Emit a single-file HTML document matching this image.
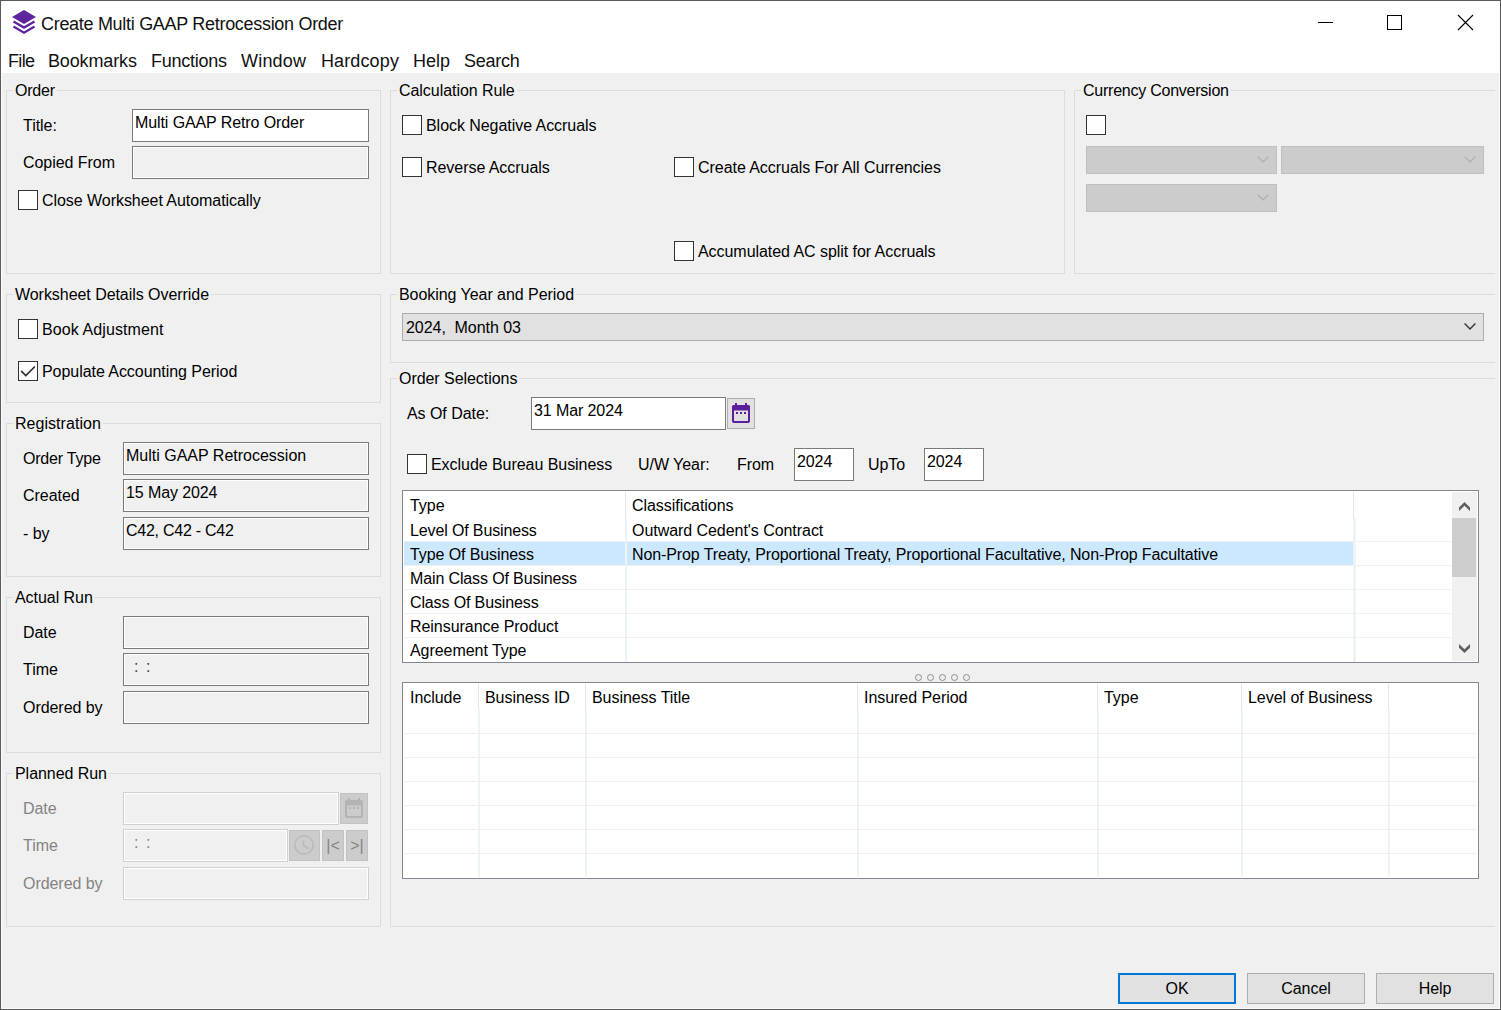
<!DOCTYPE html>
<html lang="en">
<head>
<meta charset="utf-8">
<title>Create Multi GAAP Retrocession Order</title>
<style>
*{box-sizing:border-box;margin:0;padding:0}
html,body{width:1501px;height:1010px;overflow:hidden;background:#f0f0f0}
body{font-family:"Liberation Sans",Arial,sans-serif;font-size:16px;color:#000;position:relative;letter-spacing:-0.05px}
.abs,.abs-all *{position:absolute}
#win{position:absolute;left:0;top:0;width:1501px;height:1010px;background:#f0f0f0;overflow:hidden}
#win>*,.g>*{position:absolute}
#frame{left:0;top:0;width:1501px;height:1010px;border:1px solid #5a5a5a;box-shadow:inset 0 0 0 1px #fcfcfc;pointer-events:none;z-index:50}
#titlebar{left:1px;top:1px;width:1499px;height:72px;background:#fff}
#title{color:#111;left:41px;top:13px;font-size:18px;line-height:22px;letter-spacing:-0.3px;white-space:nowrap}
.menu{color:#111;top:50px;font-size:18px;line-height:22px;letter-spacing:-0.25px;white-space:nowrap}
.g{border:1px solid #dcdcdc}
.gl{top:-10px;left:6px;padding:0 2px;background:#f0f0f0;line-height:20px;white-space:nowrap}
.t{white-space:nowrap;line-height:20px}
.dis{color:#838383}
.cb{width:20px;height:20px;background:#fff;border:1px solid #333}
.tf{background:#fff;border:1px solid #7a7a7a;padding:4px 0 0 2px;letter-spacing:-0.1px;line-height:18px;white-space:nowrap;overflow:hidden}
.ro{background:#f0f0f0;border:1px solid #7a7a7a;box-shadow:inset 0 0 0 1px #fff;padding:4px 0 0 2px;letter-spacing:-0.1px;line-height:18px;white-space:nowrap;overflow:hidden}
.df{background:#f0f0f0;border:1px solid #d0d0d0;box-shadow:inset 0 0 0 1px #fff;padding:4px 0 0 2px;letter-spacing:-0.1px;line-height:18px;white-space:nowrap;overflow:hidden;color:#838383}
.dcombo{background:#cccccc;border:1px solid #bfbfbf}
.dbtn{background:#cccccc;border:1px solid #c2c2c2}
.dt{color:#838383;text-align:center;line-height:29px;letter-spacing:0}
.btn{background:#e1e1e1;border:1px solid #adadad;text-align:center;line-height:30px;height:31px;width:118px;top:973px}
#tt>*,#bt>*{position:absolute}
.c{line-height:24px;white-space:nowrap}
.hs{width:1px;background:#e5e5e5}
.vs{width:2px;background:linear-gradient(90deg,#ebf3fc 0,#ebf3fc 1px,#f0f2f5 1px,#f0f2f5 2px)}
.vs3{width:3px;background:linear-gradient(90deg,#ebf3fc 0,#ebf3fc 1px,#eeeff1 1px,#eeeff1 2px,#eef5fd 2px,#eef5fd 3px)}
.hl{left:1px;height:1px;background:#efefef}
#tt .hl{width:1047px}
#bt .hl{width:1073px}
svg{position:absolute;overflow:visible}
</style>
</head>
<body>
<div id="win">
  <div id="titlebar"></div>
  <!-- title icon -->
  <svg style="left:0;top:0" width="48" height="44" viewBox="0 0 48 44">
    <path d="M24 10 L36 17 L24 24 L12 17 Z" fill="#5e259f"/>
    <path d="M13.5 21.5 L24 27.6 L34.5 21.5" stroke="#5e259f" stroke-width="2.3" fill="none" stroke-linecap="butt" stroke-linejoin="miter"/>
    <path d="M13.5 26.6 L24 32.7 L34.5 26.6" stroke="#5e259f" stroke-width="2.3" fill="none" stroke-linecap="butt" stroke-linejoin="miter"/>
  </svg>
  <div id="title">Create Multi GAAP Retrocession Order</div>
  <!-- window controls -->
  <svg style="left:1318px;top:15px" width="160" height="16" viewBox="0 0 160 16">
    <path d="M0 7.5 H15" stroke="#000" stroke-width="1" fill="none"/>
    <rect x="69.5" y="0.5" width="14" height="14" stroke="#000" stroke-width="1" fill="none"/>
    <path d="M140 0 L155 15 M155 0 L140 15" stroke="#000" stroke-width="1.1" fill="none"/>
  </svg>
  <!-- menu -->
  <div class="menu" style="left:8px;letter-spacing:-0.65px">File</div>
  <div class="menu" style="left:48px;letter-spacing:-0.14px">Bookmarks</div>
  <div class="menu" style="left:151px">Functions</div>
  <div class="menu" style="left:241px;letter-spacing:0.2px">Window</div>
  <div class="menu" style="left:321px;letter-spacing:0.12px">Hardcopy</div>
  <div class="menu" style="left:413px;letter-spacing:0">Help</div>
  <div class="menu" style="left:464px">Search</div>

  <!-- ORDER -->
  <div class="g" style="left:6px;top:90px;width:375px;height:184px">
    <div class="gl" style="letter-spacing:-0.2px">Order</div>
    <div class="t" style="left:16px;top:25px">Title:</div>
    <div class="tf" style="left:125px;top:18px;width:237px;height:33px">Multi GAAP Retro Order</div>
    <div class="t" style="left:16px;top:62px">Copied From</div>
    <div class="ro" style="left:125px;top:55px;width:237px;height:33px"></div>
    <div class="cb" style="left:11px;top:99px"></div>
    <div class="t" style="left:35px;top:100px">Close Worksheet Automatically</div>
  </div>

  <!-- WORKSHEET DETAILS OVERRIDE -->
  <div class="g" style="left:6px;top:294px;width:375px;height:109px">
    <div class="gl">Worksheet Details Override</div>
    <div class="cb" style="left:11px;top:24px"></div>
    <div class="t" style="left:35px;top:25px;letter-spacing:0.1px">Book Adjustment</div>
    <div class="cb" style="left:11px;top:66px"></div>
    <svg style="left:11px;top:66px" width="20" height="20" viewBox="0 0 20 20"><path d="M3.6 10.4 L7.8 14.6 L16.4 6" stroke="#2e2e2e" stroke-width="1.7" fill="none" stroke-linecap="round"/></svg>
    <div class="t" style="left:35px;top:67px">Populate Accounting Period</div>
  </div>

  <!-- REGISTRATION -->
  <div class="g" style="left:6px;top:423px;width:375px;height:154px">
    <div class="gl" style="letter-spacing:0.04px">Registration</div>
    <div class="t" style="left:16px;top:25px;letter-spacing:-0.2px">Order Type</div>
    <div class="ro" style="left:116px;top:18px;width:246px;height:33px;letter-spacing:0">Multi GAAP Retrocession</div>
    <div class="t" style="left:16px;top:62px">Created</div>
    <div class="ro" style="left:116px;top:55px;width:246px;height:33px">15 May 2024</div>
    <div class="t" style="left:16px;top:100px">- by</div>
    <div class="ro" style="left:116px;top:93px;width:246px;height:33px;letter-spacing:-0.25px">C42, C42 - C42</div>
  </div>

  <!-- ACTUAL RUN -->
  <div class="g" style="left:6px;top:597px;width:375px;height:156px">
    <div class="gl">Actual Run</div>
    <div class="t" style="left:16px;top:25px">Date</div>
    <div class="ro" style="left:116px;top:18px;width:246px;height:33px"></div>
    <div class="t" style="left:16px;top:62px">Time</div>
    <div class="ro" style="left:116px;top:55px;width:246px;height:33px;white-space:pre;letter-spacing:-0.45px;color:#3a3a3a">  :  :</div>
    <div class="t" style="left:16px;top:100px">Ordered by</div>
    <div class="ro" style="left:116px;top:93px;width:246px;height:33px"></div>
  </div>

  <!-- PLANNED RUN -->
  <div class="g" style="left:6px;top:773px;width:375px;height:154px">
    <div class="gl">Planned Run</div>
    <div class="t dis" style="left:16px;top:25px">Date</div>
    <div class="df" style="left:116px;top:18px;width:216px;height:33px"></div>
    <div class="dbtn" style="left:333px;top:19px;width:28px;height:31px"><svg style="left:-1px;top:-1px" width="28" height="31" viewBox="0 0 28 31"><rect x="6" y="8" width="16" height="16" rx="1.6" fill="none" stroke="#b4b4b4" stroke-width="2"/><path d="M5 12.5 V9 a2 2 0 0 1 2 -2 H21 a2 2 0 0 1 2 2 V12.5 Z" fill="#b4b4b4"/><rect x="8" y="5" width="2" height="3" fill="#b4b4b4"/><rect x="18" y="5" width="2" height="3" fill="#b4b4b4"/><rect x="9" y="14" width="2" height="2" fill="#b4b4b4"/><rect x="13" y="14" width="2" height="2" fill="#b4b4b4"/><rect x="17" y="14" width="2" height="2" fill="#b4b4b4"/></svg></div>
    <div class="t dis" style="left:16px;top:62px">Time</div>
    <div class="df" style="left:116px;top:55px;width:165px;height:33px;white-space:pre;letter-spacing:-0.45px">  :  :</div>
    <div class="dbtn" style="left:282px;top:56px;width:31px;height:31px"><svg style="left:-1px;top:-1px" width="31" height="31" viewBox="0 0 31 31"><circle cx="15" cy="15" r="9.2" fill="none" stroke="#bababa" stroke-width="1.6"/><path d="M14.5 10.5 V15.5 L19.5 18.7" fill="none" stroke="#bababa" stroke-width="1.5"/></svg></div>
    <div class="dbtn dt" style="left:315px;top:56px;width:22px;height:31px">|&lt;</div>
    <div class="dbtn dt" style="left:339px;top:56px;width:22px;height:31px">&gt;|</div>
    <div class="t dis" style="left:16px;top:100px">Ordered by</div>
    <div class="df" style="left:116px;top:93px;width:246px;height:33px"></div>
  </div>

  <!-- CALCULATION RULE -->
  <div class="g" style="left:390px;top:90px;width:675px;height:184px">
    <div class="gl">Calculation Rule</div>
    <div class="cb" style="left:11px;top:24px"></div>
    <div class="t" style="left:35px;top:25px">Block Negative Accruals</div>
    <div class="cb" style="left:11px;top:66px"></div>
    <div class="t" style="left:35px;top:67px">Reverse Accruals</div>
    <div class="cb" style="left:283px;top:66px"></div>
    <div class="t" style="left:307px;top:67px">Create Accruals For All Currencies</div>
    <div class="cb" style="left:283px;top:150px"></div>
    <div class="t" style="left:307px;top:151px">Accumulated AC split for Accruals</div>
  </div>

  <!-- CURRENCY CONVERSION -->
  <div class="g" style="left:1074px;top:90px;width:421px;height:184px;border-right:0">
    <div class="gl" style="letter-spacing:-0.24px">Currency Conversion</div>
    <div class="cb" style="left:11px;top:24px"></div>
    <div class="dcombo" style="left:11px;top:55px;width:191px;height:28px"><svg style="right:7px;top:9px" width="12" height="7" viewBox="0 0 12 7"><path d="M0.6 0.6 L6 6 L11.4 0.6" fill="none" stroke="#adadad" stroke-width="1.2"/></svg></div>
    <div class="dcombo" style="left:206px;top:55px;width:203px;height:28px"><svg style="right:7px;top:9px" width="12" height="7" viewBox="0 0 12 7"><path d="M0.6 0.6 L6 6 L11.4 0.6" fill="none" stroke="#adadad" stroke-width="1.2"/></svg></div>
    <div class="dcombo" style="left:11px;top:93px;width:191px;height:28px"><svg style="right:7px;top:9px" width="12" height="7" viewBox="0 0 12 7"><path d="M0.6 0.6 L6 6 L11.4 0.6" fill="none" stroke="#adadad" stroke-width="1.2"/></svg></div>
  </div>

  <!-- BOOKING YEAR AND PERIOD -->
  <div class="g" style="left:390px;top:294px;width:1105px;height:69px;border-right:0">
    <div class="gl">Booking Year and Period</div>
    <div style="left:11px;top:18px;width:1082px;height:28px;background:#e1e1e1;border:1px solid #adadad;line-height:28px;padding-left:3px;white-space:pre">2024,  Month 03<svg style="right:7px;top:9px" width="12" height="7" viewBox="0 0 12 7"><path d="M0.6 0.6 L6 6 L11.4 0.6" fill="none" stroke="#333" stroke-width="1.4"/></svg></div>
  </div>

  <!-- ORDER SELECTIONS -->
  <div class="g" style="left:390px;top:378px;width:1105px;height:549px;border-right:0">
    <div class="gl">Order Selections</div>
    <div class="t" style="left:16px;top:25px">As Of Date:</div>
    <div class="tf" style="left:140px;top:18px;width:195px;height:33px">31 Mar 2024</div>
    <div style="left:336px;top:19px;width:28px;height:31px;background:#e1e1e1;border:1px solid #adadad"><svg style="left:-1px;top:-1px" width="28" height="31" viewBox="0 0 28 31"><rect x="6" y="8" width="16" height="16" rx="1.6" fill="none" stroke="#5a1f9d" stroke-width="2"/><path d="M5 12.5 V9 a2 2 0 0 1 2 -2 H21 a2 2 0 0 1 2 2 V12.5 Z" fill="#5a1f9d"/><rect x="8" y="5" width="2" height="3" fill="#5a1f9d"/><rect x="18" y="5" width="2" height="3" fill="#5a1f9d"/><rect x="9" y="14" width="2" height="2" fill="#5a1f9d"/><rect x="13" y="14" width="2" height="2" fill="#5a1f9d"/><rect x="17" y="14" width="2" height="2" fill="#5a1f9d"/></svg></div>
    <div class="cb" style="left:16px;top:75px"></div>
    <div class="t" style="left:40px;top:76px">Exclude Bureau Business</div>
    <div class="t" style="left:247px;top:76px">U/W Year:</div>
    <div class="t" style="left:346px;top:76px">From</div>
    <div class="tf" style="left:403px;top:69px;width:60px;height:33px">2024</div>
    <div class="t" style="left:477px;top:76px">UpTo</div>
    <div class="tf" style="left:533px;top:69px;width:60px;height:33px">2024</div>
  </div>


  <!-- TOP TABLE -->
  <div id="tt" style="left:402px;top:490px;width:1077px;height:173px;background:#fff;border:1px solid #828790">
    <div class="sel" style="left:1px;top:51px;width:950px;height:23px;background:#cce8ff"></div>
    <div class="hs" style="left:222px;top:1px;height:26px"></div>
    <div class="hs" style="left:950px;top:1px;height:26px"></div>
    <div class="vs" style="left:222px;top:27px;height:144px"></div>
    <div class="vs vs3" style="left:950px;top:27px;height:144px"></div>
    <div class="hl" style="top:50px"></div><div class="hl" style="top:74px"></div><div class="hl" style="top:98px"></div><div class="hl" style="top:122px"></div><div class="hl" style="top:146px"></div>
    <div class="c" style="left:7px;top:3px">Type</div><div class="c" style="left:229px;top:3px">Classifications</div>
    <div class="c" style="left:7px;top:28px;letter-spacing:-0.13px">Level Of Business</div><div class="c" style="left:229px;top:28px">Outward Cedent's Contract</div>
    <div class="c" style="left:7px;top:52px;letter-spacing:-0.1px">Type Of Business</div><div class="c" style="left:229px;top:52px;letter-spacing:-0.11px">Non-Prop Treaty, Proportional Treaty, Proportional Facultative, Non-Prop Facultative</div>
    <div class="c" style="left:7px;top:76px;letter-spacing:-0.13px">Main Class Of Business</div>
    <div class="c" style="left:7px;top:100px;letter-spacing:-0.13px">Class Of Business</div>
    <div class="c" style="left:7px;top:124px">Reinsurance Product</div>
    <div class="c" style="left:7px;top:148px">Agreement Type</div>
    <div style="left:1049px;top:1px;width:25px;height:169px;background:#f0f0f0"></div>
    <div style="left:1049px;top:27px;width:24px;height:59px;background:#cdcdcd"></div>
    <svg style="left:1049px;top:1px" width="25" height="169" viewBox="0 0 25 169">
      <path d="M12.5 10 L18 15.5 V19 L12.5 13.7 L7 19 V15.5 Z" fill="#606060"/>
      <path d="M7 152 L12.5 157.3 L18 152 V155.7 L12.5 161 L7 155.7 Z" fill="#606060"/>
    </svg>
  </div>
  <!-- splitter dots -->
  <svg style="left:914px;top:673px" width="58" height="10" viewBox="0 0 58 10">
    <g fill="none" stroke="#8e8e8e" stroke-width="1"><circle cx="4.5" cy="4.5" r="3"/><circle cx="16.5" cy="4.5" r="3"/><circle cx="28.5" cy="4.5" r="3"/><circle cx="40.5" cy="4.5" r="3"/><circle cx="52.5" cy="4.5" r="3"/></g>
  </svg>
  <!-- BOTTOM TABLE -->
  <div id="bt" style="left:402px;top:682px;width:1077px;height:197px;background:#fff;border:1px solid #828790">
    <div class="hs" style="left:75px;top:1px;height:26px"></div><div class="hs" style="left:182px;top:1px;height:26px"></div><div class="hs" style="left:454px;top:1px;height:26px"></div><div class="hs" style="left:694px;top:1px;height:26px"></div><div class="hs" style="left:838px;top:1px;height:26px"></div><div class="hs" style="left:985px;top:1px;height:26px"></div>
    <div class="vs" style="left:75px;top:27px;height:167px"></div><div class="vs" style="left:182px;top:27px;height:167px"></div><div class="vs" style="left:454px;top:27px;height:167px"></div><div class="vs" style="left:694px;top:27px;height:167px"></div><div class="vs" style="left:838px;top:27px;height:167px"></div><div class="vs" style="left:985px;top:27px;height:167px"></div>
    <div class="hl" style="top:50px"></div><div class="hl" style="top:74px"></div><div class="hl" style="top:98px"></div><div class="hl" style="top:122px"></div><div class="hl" style="top:146px"></div><div class="hl" style="top:170px"></div>
    <div class="c" style="left:7px;top:3px">Include</div><div class="c" style="left:82px;top:3px">Business ID</div><div class="c" style="left:189px;top:3px">Business Title</div><div class="c" style="left:461px;top:3px">Insured Period</div><div class="c" style="left:701px;top:3px">Type</div><div class="c" style="left:845px;top:3px">Level of Business</div>
  </div>

  <!-- buttons -->
  <div class="btn" style="left:1118px;border:2px solid #0078d7;line-height:28px">OK</div>
  <div class="btn" style="left:1247px">Cancel</div>
  <div class="btn" style="left:1376px">Help</div>

  <div id="frame"></div>
</div>
</body>
</html>
